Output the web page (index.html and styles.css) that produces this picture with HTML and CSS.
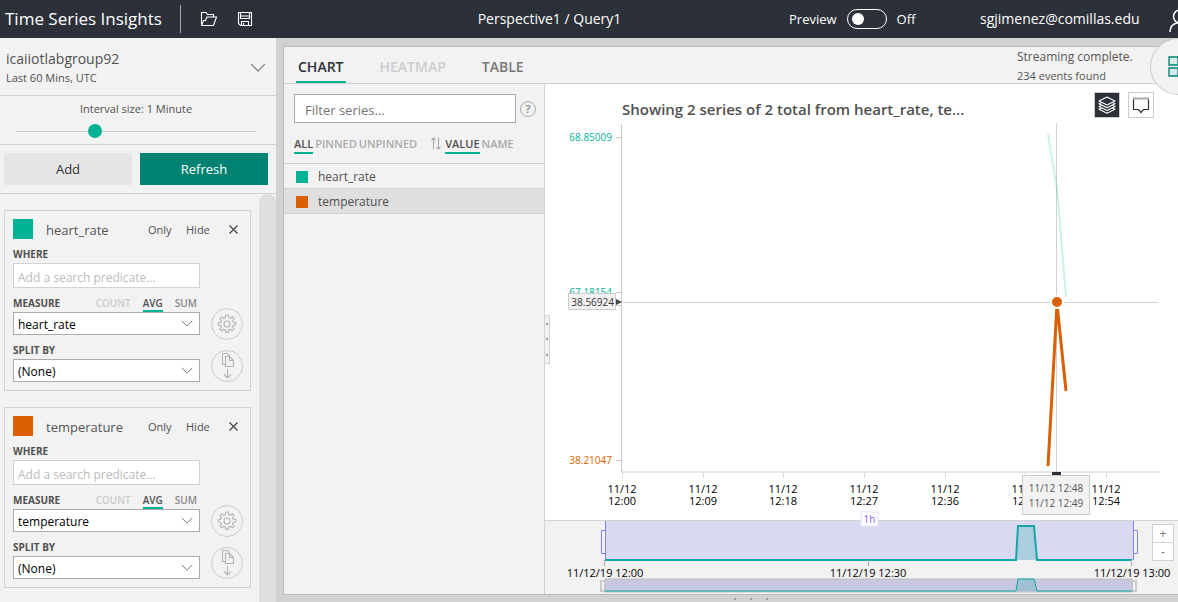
FILE: index.html
```html
<!DOCTYPE html>
<html lang="en">
<head>
<meta charset="utf-8">
<title>Time Series Insights</title>
<link rel="stylesheet" href="styles.css">
</head>
<body>
<svg class="defs" aria-hidden="true">
  <symbol id="chevron" viewBox="0 0 16 9"><path d="M1 1l7 7 7-7" fill="none" stroke="currentColor" stroke-width="1.3"/></symbol>
  <symbol id="gear" viewBox="0 0 20 20"><g fill="none" stroke="currentColor" stroke-width="1.1" stroke-linejoin="round"><path d="M8.4 3.5L8.7 1h2.6l.3 2.5 1.6.7 2-1.6 1.9 1.9-1.6 2 .7 1.6 2.5.3v2.6l-2.5.3-.7 1.6 1.6 2-1.9 1.9-2-1.6-1.6.7-.3 2.5H8.7l-.3-2.5-1.6-.7-2 1.6-1.9-1.9 1.6-2-.7-1.6-2.5-.3V8.700l2.500-.3.7-1.600-1.600-2 1.900-1.900 2 1.600z"/><circle cx="10" cy="10" r="3"/></g></symbol>
  <symbol id="split" viewBox="0 0 16 26"><g fill="none" stroke="currentColor" stroke-width="1.1"><path d="M6.500 11.500h-3v-11h5l2.500 2.500"/><path d="M6.500 3.500h4l4 4v6h-8zM10.500 3.500v4h4M8.500 16v9M5 21.500L8.500 25l3.500-3.500"/></g></symbol>
</svg>

<header class="topbar">
  <h1 class="brand">Time Series Insights</h1>
  <span class="divider"></span>
  <button class="bar-btn" aria-label="Open"><svg width="18" height="16" viewBox="0 0 18 16" fill="none" stroke="#fff" stroke-width="1.1"><path d="M13.500 6V3.500h-6l-1.500-2H1.500v13M1.500 14.500h12l3-8.500H7L5.500 9.500H3.500l-2 5"/></svg></button>
  <button class="bar-btn" aria-label="Save"><svg width="16" height="16" viewBox="0 0 16 16" fill="none" stroke="#fff" stroke-width="1.100"><path d="M1.500 1.500h13v13h-11l-2-2zM3.500 1.500v6h9v-6M3.500 5h9M4.500 14.500v-4h7v4M6.500 12v2.500"/></svg></button>
  <div class="doc-name">Perspective1 / Query1</div>
  <label class="preview"><span>Preview</span><input type="checkbox" class="toggle"><span>Off</span></label>
  <a class="account" href="#">sgjimenez@comillas.edu</a>
  <svg class="person" width="24" height="24" viewBox="0 0 24 24" fill="none" stroke="#fff" stroke-width="1.500"><circle cx="11" cy="7.500" r="6.500"/><path d="M1 23c0-6 3-8 7-9h6c4 1 7 3 7 9"/></svg>
</header>

<div class="workspace">
  <aside class="sidebar">
    <button class="dataset">
      <span class="dataset-text"><span class="dataset-name">icaiiotlabgroup92</span><span class="dataset-range">Last 60 Mins, UTC</span></span>
      <svg width="16" height="9"><use href="#chevron"/></svg>
    </button>
    <div class="interval">
      <label for="interval">Interval size: 1 Minute</label>
      <input id="interval" type="range" min="0" max="100" value="32">
    </div>
    <div class="actions">
      <button class="add">Add</button>
      <button class="refresh">Refresh</button>
    </div>
    <div class="terms">
      <div class="cards">
        <section class="card">
          <div class="card-head">
            <span class="swatch teal"></span><h2>heart_rate</h2>
            <button>Only</button><button>Hide</button>
            <button class="close" aria-label="Remove heart_rate"><svg width="9" height="9" viewBox="0 0 9 9"><path d="M.5.5l8 8M8.500.5l-8 8" stroke="#444" stroke-width="1.200"/></svg></button>
          </div>
          <div class="card-body">
            <div class="fields">
              <div class="field-row"><label for="w1">WHERE</label></div>
              <input id="w1" type="text" placeholder="Add a search predicate...">
              <div class="field-row"><label for="m1">MEASURE</label><div class="aggs"><button class="off">COUNT</button><button class="on">AVG</button><button>SUM</button></div></div>
              <div class="select"><select id="m1"><option>heart_rate</option></select><svg width="12" height="7"><use href="#chevron"/></svg></div>
              <div class="field-row"><label for="s1">SPLIT BY</label></div>
              <div class="select"><select id="s1"><option>(None)</option></select><svg width="12" height="7"><use href="#chevron"/></svg></div>
            </div>
            <div class="rounds">
              <button aria-label="Settings"><svg width="20" height="20"><use href="#gear"/></svg></button>
              <button aria-label="Split"><svg width="16" height="26"><use href="#split"/></svg></button>
            </div>
          </div>
        </section>
        <section class="card">
          <div class="card-head">
            <span class="swatch orange"></span><h2>temperature</h2>
            <button>Only</button><button>Hide</button>
            <button class="close" aria-label="Remove temperature"><svg width="9" height="9" viewBox="0 0 9 9"><path d="M.5.5l8 8M8.500.5l-8 8" stroke="#444" stroke-width="1.200"/></svg></button>
          </div>
          <div class="card-body">
            <div class="fields">
              <div class="field-row"><label for="w2">WHERE</label></div>
              <input id="w2" type="text" placeholder="Add a search predicate...">
              <div class="field-row"><label for="m2">MEASURE</label><div class="aggs"><button class="off">COUNT</button><button class="on">AVG</button><button>SUM</button></div></div>
              <div class="select"><select id="m2"><option>temperature</option></select><svg width="12" height="7"><use href="#chevron"/></svg></div>
              <div class="field-row"><label for="s2">SPLIT BY</label></div>
              <div class="select"><select id="s2"><option>(None)</option></select><svg width="12" height="7"><use href="#chevron"/></svg></div>
            </div>
            <div class="rounds">
              <button aria-label="Settings"><svg width="20" height="20"><use href="#gear"/></svg></button>
              <button aria-label="Split"><svg width="16" height="26"><use href="#split"/></svg></button>
            </div>
          </div>
        </section>
      </div>
      <div class="scrollbar"></div>
    </div>
  </aside>

  <main class="main">
    <div class="panel">
      <div class="panel-head">
        <nav class="tabs">
          <button class="active">CHART</button><button class="disabled">HEATMAP</button><button>TABLE</button>
        </nav>
        <div class="status"><span class="status-main">Streaming complete.</span><span class="status-sub">234 events found</span></div>
      </div>
      <div class="panel-body">
        <div class="series">
          <div class="filter">
            <input type="text" placeholder="Filter series..." aria-label="Filter series">
            <button class="help" aria-label="Help">?</button>
          </div>
          <div class="sorts">
            <button class="on">ALL</button><button>PINNED</button><button>UNPINNED</button>
            <svg class="sort-icon" width="10" height="13" viewBox="0 0 10 13" fill="none" stroke="#aaa" stroke-width="1.100"><path d="M2.500 12.500V1M.5 3l2-2 2 2M7.500.5V12M5.500 10l2 2 2-2"/></svg>
            <button class="on">VALUE</button><button>NAME</button>
          </div>
          <ul class="legend">
            <li><span class="dot teal"></span>heart_rate</li>
            <li class="selected"><span class="dot orange"></span>temperature</li>
          </ul>
          <div class="splitter"><i></i><i></i><i></i></div>
        </div>
        <div class="viz">
          <div class="viz-head">
            <h3>Showing 2 series of 2 total from heart_rate, te...</h3>
            <button class="dark" aria-label="Layers"><svg width="20" height="20" viewBox="0 0 20 20" fill="none" stroke="#fff" stroke-width="1.100" stroke-linejoin="round"><path d="M10 2l8 4-8 4-8-4zM4.500 7.500L2 8.800l8 4 8-4-2.500-1.300M4.500 10.300L2 11.500l8 4 8-4-2.500-1.200M4.500 13L2 14.200l8 4 8-4-2.500-1.200"/></svg></button>
            <button aria-label="Comment"><svg width="18" height="18" viewBox="0 0 18 18" fill="none" stroke="#333" stroke-width="1.200"><path d="M1.500 3v10.500h5l2.500 3 2.500-3h5V3"/><path d="M1 2.500h16" stroke="#aaa" stroke-width="2"/></svg></button>
          </div>
          <svg class="chart" viewBox="0 0 633 398" role="img" aria-label="Time series chart">
            <path d="M76.500 2v348M71 15.500h5M71 170.500h5M71 183.500h5M71 338.500h5" class="axis"/>
            <path d="M77 350h538" class="axis-x"/>
            <path d="M77.500 350v6M158.500 350v6M238.500 350v6M319.500 350v6M400.500 350v6M480.500 350v6M561.500 350v6" class="tick"/>
            <g class="y-label" text-anchor="end"><text x="67" y="19" class="t">68.85009</text><text x="67" y="174" class="t">67.18154</text><text x="67" y="342" class="o">38.21047</text></g>
            <g class="x-label" text-anchor="middle">
              <text x="77" y="371">11/12</text><text x="77" y="383">12:00</text>
              <text x="158" y="371">11/12</text><text x="158" y="383">12:09</text>
              <text x="238" y="371">11/12</text><text x="238" y="383">12:18</text>
              <text x="319" y="371">11/12</text><text x="319" y="383">12:27</text>
              <text x="400" y="371">11/12</text><text x="400" y="383">12:36</text>
              <text x="481" y="371">11/12</text><text x="481" y="383">12:45</text>
              <text x="561" y="371">11/12</text><text x="561" y="383">12:54</text>
            </g>
            <path d="M511.500 1v350M77 180.500h536" class="cross"/>
            <path d="M503 12l9 55 9 108" class="line-teal"/>
            <path d="M503 344l9-162 9 87" class="line-orange"/>
            <circle cx="512" cy="180" r="6" class="point"/>
            <rect x="507" y="350" width="9" height="3" fill="#2c3038"/>
            <rect x="477.500" y="353.500" width="67" height="39" class="tip"/>
            <g class="tip-text"><text x="511" y="370">11/12 12:48</text><text x="511" y="385">11/12 12:49</text></g>
            <rect x="23.500" y="171.500" width="47" height="16" class="tip"/>
            <text x="69" y="184" text-anchor="end" class="tip-value">38.56924</text>
            <path d="M71 177l6 3-6 3z" fill="#444"/>
          </svg>
          <div class="brush">
            <svg viewBox="0 0 633 73" role="img" aria-label="Time range">
              <rect x="60" y="0" width="528" height="39" fill="#d9d9f2"/>
              <path d="M60 39h411l2-34h16l3 34h95" class="area"/>
              <path d="M60.500 0v39M588.500 0v39M60 9.500h-3.500v23H60M589 9.500h3.500v23H589" fill="none" stroke="#8080ff"/>
              <path d="M59.500 39v6M323.500 39v6M586.500 39v6" stroke="#aaa"/>
              <g class="x-label" text-anchor="middle"><text x="60" y="56">11/12/19 12:00</text><text x="323" y="56">11/12/19 12:30</text><text x="587" y="56">11/12/19 13:00</text></g>
              <rect x="56" y="60" width="4" height="10" class="handle"/><rect x="587" y="60" width="4" height="10" class="handle"/>
              <rect x="60" y="58" width="527" height="13" fill="#c9c8e2" stroke="#bbb"/>
              <path d="M60 70h411l2-12h16l3 12h95" class="area small"/>
              <rect x="316" y="-9" width="17" height="14" fill="#fff" stroke="#e4e4f8"/>
              <text x="324.500" y="2" text-anchor="middle" class="span">1h</text>
            </svg>
            <div class="zoom"><button aria-label="Zoom in">+</button><button aria-label="Zoom out">-</button></div>
          </div>
        </div>
      </div>
    </div>
    <div class="bottom-grip"><i></i><i></i><i></i></div>
    <button class="views" aria-label="Views"><svg width="22" height="22" viewBox="0 0 22 22" fill="#d5ebe8" stroke="#008272" stroke-width="1.300"><path d="M1 1h9v8H1zM12 1h9v8h-9zM1 12h9v8H1zM12 12h9v8h-9z"/></svg></button>
  </main>
</div>
</body>
</html>
```
FILE: styles.css
```css
* { box-sizing: border-box; }
body {
  margin: 0;
  min-height: 100vh;
  display: flex;
  flex-direction: column;
  overflow-x: hidden;
  background: #d2d2d2;
  color: #505050;
  font: 12px/16px "Segoe UI", "Open Sans", sans-serif;
}
button, input, select { font: inherit; color: inherit; }
button { padding: 0; border: 0; background: none; cursor: pointer; }
h1, h2, h3, ul { margin: 0; padding: 0; font-weight: 400; list-style: none; }
.defs { position: absolute; width: 0; height: 0; }
.teal { background: #00b294; }
.orange { background: #d95f00; }

.topbar {
  display: flex;
  align-items: center;
  height: 38px;
  padding-left: 5px;
  overflow: hidden;
  background: #2c3038;
  color: #fff;
  font-size: 14px;
  white-space: nowrap;
}
.topbar > * { flex: none; }
.brand { width: 175px; font-size: 17px; line-height: 24px; }
.divider { width: 1px; height: 28px; margin-right: 19px; background: #aaa; }
.bar-btn { display: flex; width: 18px; margin-right: 19px; }
.topbar > .doc-name { flex: 1; padding-left: 36px; text-align: center; }
.preview { display: flex; align-items: center; gap: 10px; width: 191px; font-size: 13px; }
.toggle {
  appearance: none;
  display: flex;
  align-items: center;
  width: 40px;
  height: 20px;
  margin: 0;
  padding-left: 4px;
  border: 1px solid #fff;
  border-radius: 10px;
}
.toggle::before { content: ""; width: 12px; height: 12px; border-radius: 50%; background: #fff; }
.account { width: 189px; color: inherit; font-size: 14px; text-decoration: none; }
.person { margin-right: -15px; margin-top: 3px; }

.workspace { flex: 1; display: flex; }

.sidebar {
  flex: none;
  display: flex;
  flex-direction: column;
  width: 276px;
  background: #f2f2f2;
}
.dataset {
  display: flex;
  align-items: center;
  justify-content: space-between;
  height: 58px;
  padding: 2px 10px 0 6px;
  border-bottom: 1px solid #d2d2d2;
  text-align: left;
}
.dataset svg { color: #888; }
.dataset-text { display: flex; flex-direction: column; }
.dataset-name { font-size: 14px; line-height: 21px; }
.dataset-range { font-size: 11px; line-height: 18px; }
.interval {
  display: flex;
  flex-direction: column;
  align-items: center;
  height: 49px;
  padding: 5px 4px 0 0;
  border-bottom: 1px solid #d2d2d2;
  font-size: 11px;
}
.interval input {
  appearance: none;
  width: 240px;
  height: 14px;
  margin: 7px 0 0;
  background: linear-gradient(#ccc, #ccc) center / 100% 1px no-repeat;
}
.interval input::-webkit-slider-thumb {
  appearance: none;
  width: 14px;
  height: 14px;
  border-radius: 50%;
  background: #00b294;
}
.actions { display: flex; gap: 8px; padding: 8px 8px 8px 4px; border-bottom: 1px solid #d2d2d2; }
.actions button { flex: 1; height: 32px; font-size: 13px; }
.add { background: #e6e6e6; color: #333; }
.refresh { background: #008272; }
.actions .refresh { color: #fff; font-weight: 500; }

.terms { flex: 1; display: flex; }
.cards { flex: 1; display: flex; flex-direction: column; gap: 16px; padding: 16px 8px 14px 4px; }
.scrollbar { width: 17px; border-radius: 8px 8px 0 0; background: #dfdfdf; }
.card { padding: 8px 7px 8px 8px; border: 1px solid #d2d2d2; }
.card-head { display: flex; align-items: center; height: 20px; font-size: 11px; }
.swatch { width: 20px; height: 20px; }
.card-head h2 { width: 115px; padding: 2px 0 0 13px; color: #555; font-size: 13px; line-height: 20px; }
.card-head button { width: 38px; padding: 2px 0 0 12px; text-align: left; }
.card-head button:first-of-type { padding-left: 0; width: 26px; }
.card-head .close { display: flex; width: 28px; padding: 1px 0 0 17px; }
.card-body { display: flex; justify-content: space-between; gap: 11px; }
.fields { flex: 1; min-width: 0; }
.field-row {
  display: flex;
  justify-content: space-between;
  padding-top: 6px;
  font-size: 10px;
  line-height: 18px;
  font-weight: 700;
}
.aggs { display: flex; gap: 12px; padding-right: 3px; font-weight: 600; color: #888; }
.aggs .off { color: #ccc; }
.aggs .on { color: #505050; box-shadow: inset 0 -2px #00b294; }
.fields > input {
  display: block;
  width: 100%;
  height: 25px;
  padding: 4px 4px 0;
  border: 1px solid #d2d2d2;
  border-radius: 0;
  background: #fff;
  font-size: 12px;
}
.fields > input::placeholder { color: #bbb; }
.select { position: relative; }
.select select {
  appearance: none;
  display: block;
  width: 100%;
  height: 23px;
  padding: 2px 4px 0;
  border: 1px solid #aaa;
  border-radius: 0;
  background: #fff;
  color: #000;
  font-size: 12px;
}
.select svg { position: absolute; right: 7px; top: 8px; color: #777; pointer-events: none; }
.rounds { flex: none; display: flex; flex-direction: column; justify-content: flex-end; gap: 10px; }
.rounds button {
  display: flex;
  align-items: center;
  justify-content: center;
  width: 32px;
  height: 32px;
  border: 1px solid #ccc;
  border-radius: 50%;
  color: #b4b4b4;
}

.main { position: relative; flex: 1; display: flex; flex-direction: column; min-width: 0; padding: 8px 0 0 7px; }
.panel {
  flex: 1;
  display: flex;
  flex-direction: column;
  border: 1px solid #bbb;
  border-width: 1px 0 1px 1px;
  background: #f2f2f2;
}
.panel-head {
  display: flex;
  justify-content: space-between;
  height: 37px;
  padding: 0 42px 0 12px;
  border-bottom: 1px solid #d2d2d2;
}
.tabs { display: flex; gap: 32px; }
.tabs button { padding: 6px 2px 0; border-bottom: 2px solid transparent; color: #777; font-size: 14px; font-weight: 600; }
.tabs .active { border-color: #00b294; color: #2c3038; }
.tabs .disabled { color: #ccc; }
.status { display: flex; flex-direction: column; width: 119px; color: #555; white-space: nowrap; }
.status-main { font-size: 12px; line-height: 20px; }
.status-sub { font-size: 11px; line-height: 18px; }
.panel-body { flex: 1; display: flex; }
.series { position: relative; flex: none; width: 261px; border-right: 1px solid #d2d2d2; }
.filter { display: flex; align-items: center; gap: 4px; padding: 10px 8px 0 10px; }
.filter input {
  flex: 1;
  min-width: 0;
  height: 29px;
  padding: 2px 10px 0;
  border: 1px solid #aaa;
  border-radius: 0;
  background: #fff;
  font-size: 13px;
}
.help { width: 16px; height: 16px; border: 1px solid #aaa; border-radius: 50%; color: #888; font-size: 11px; line-height: 14px; font-weight: 600; }
.sorts { display: flex; align-items: center; gap: 2px; height: 41px; padding: 0 10px; border-bottom: 1px solid #d2d2d2; font-size: 11px; }
.sorts button { height: 22px; padding-top: 3px; border-bottom: 2px solid transparent; color: #aaa; font-weight: 600; }
.sorts .on { border-color: #00b294; color: #505050; }
.sort-icon { margin: 0 2px 0 12px; }
.legend li { display: flex; align-items: center; gap: 10px; height: 25px; padding: 1px 0 0 12px; border-bottom: 1px solid #d2d2d2; }
.legend .selected { background: #dfdfdf; }
.dot { width: 12px; height: 12px; }
.splitter {
  position: absolute;
  left: 100%;
  top: 231px;
  display: flex;
  flex-direction: column;
  align-items: center;
  justify-content: space-around;
  width: 6px;
  height: 49px;
  border: 1px solid #d2d2d2;
  background: #f2f2f2;
}
.splitter i, .bottom-grip i { width: 2px; height: 2px; background: #999; }

.viz { flex: 1; display: flex; flex-direction: column; min-width: 0; background: #fff; }
.viz-head { display: flex; align-items: center; gap: 8px; height: 38px; padding: 8px 24px 4px 77px; }
.viz-head h3 { flex: 1; padding-top: 7px; font-size: 15px; font-weight: 600; line-height: 20px; }
.viz-head button { display: flex; align-items: center; justify-content: center; width: 26px; height: 26px; border: 1px solid #ccc; }
.viz-head .dark { background: #2c3038; }
.chart { display: block; width: 100%; }
.chart text, .brush text { font-size: 11px; }
.axis { fill: none; stroke: #c8c8c8; }
.axis-x { stroke: #e6e6e6; stroke-width: 2; }
.tick { stroke: #d6d6d6; }
.cross { fill: none; stroke: #d2d2d2; }
.t { fill: #00b294; }
.o { fill: #d95f00; }
.chart .y-label text, .chart .tip-value, .chart .tip-text text { font-size: 10px; }
.x-label { fill: #000; }
.line-teal { fill: none; stroke: #00b294; stroke-width: 2; opacity: .2; }
.line-orange { fill: none; stroke: #d95f00; stroke-width: 3; }
.point { fill: #d95f00; stroke: #fff; stroke-width: 2; }
.tip { fill: #f2f2f2; stroke: #ccc; }
.tip-text { fill: #555; text-anchor: middle; }
.tip-value { fill: #333; }
.brush { position: relative; border-top: 1px solid #d2d2d2; background: #f2f2f2; flex: 1; }
.brush > svg { display: block; width: 100%; overflow: visible; }
.area { fill: rgba(0, 160, 160, .2); stroke: #13a8a3; stroke-width: 2; }
.small { stroke-width: 1; }
.handle { fill: none; stroke: #ccc; stroke-width: 2; }
.brush .span { fill: #8a5cff; font-size: 10px; }
.zoom { position: absolute; top: 3px; right: 4px; display: flex; flex-direction: column; width: 22px; border: 1px solid #d2d2d2; background: #fff; }
.zoom button { height: 17px; line-height: 16px; color: #777; }
.zoom button + button { height: 18px; border-top: 1px solid #d2d2d2; }
.bottom-grip { display: flex; align-items: center; justify-content: center; gap: 14px; height: 7px; padding-left: 40px; }
.views {
  position: absolute;
  top: 0;
  right: -30px;
  width: 58px;
  height: 57px;
  display: flex;
  align-items: center;
  padding-left: 17px;
  border: 1px solid #ccc;
  border-radius: 50%;
  background: #f2f2f2;
}
```
